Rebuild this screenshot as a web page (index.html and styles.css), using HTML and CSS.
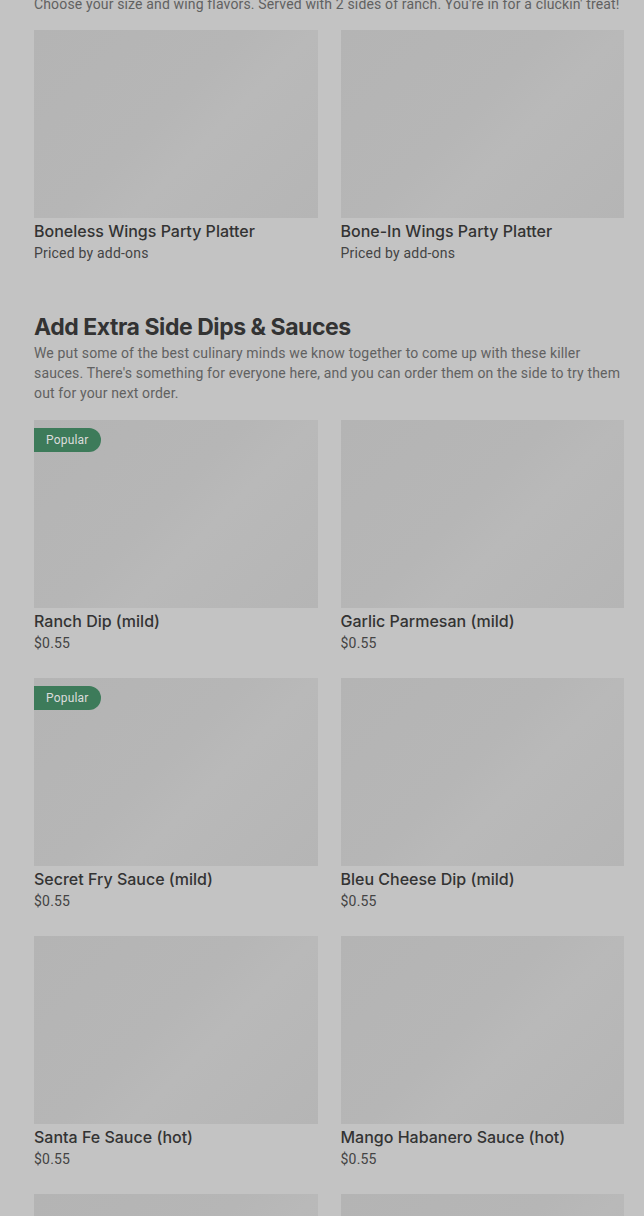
FILE: index.html
```html
<!DOCTYPE html>
<html lang="en">
<head>
<meta charset="utf-8">
<link rel="stylesheet" href="styles.css">
</head>
<body>
<div class="page">
  <section class="section first">
    <p class="desc">Choose your size and wing flavors. Served with 2 sides of ranch. You're in for a cluckin' treat!</p>
    <div class="grid">
      <div class="card"><div class="img"></div><div class="name">Boneless Wings Party Platter</div><div class="price">Priced by add-ons</div></div>
      <div class="card"><div class="img"></div><div class="name">Bone-In Wings Party Platter</div><div class="price">Priced by add-ons</div></div>
    </div>
  </section>
  <section class="section">
    <h2 class="title">Add Extra Side Dips &amp; Sauces</h2>
    <p class="desc">We put some of the best culinary minds we know together to come up with these killer sauces. There's something for everyone here, and you can order them on the side to try them out for your next order.</p>
    <div class="grid">
      <div class="card"><div class="img"><span class="badge">Popular</span></div><div class="name">Ranch Dip (mild)</div><div class="price">$0.55</div></div>
      <div class="card"><div class="img"></div><div class="name">Garlic Parmesan (mild)</div><div class="price">$0.55</div></div>
      <div class="card"><div class="img"><span class="badge">Popular</span></div><div class="name">Secret Fry Sauce (mild)</div><div class="price">$0.55</div></div>
      <div class="card"><div class="img"></div><div class="name">Bleu Cheese Dip (mild)</div><div class="price">$0.55</div></div>
      <div class="card"><div class="img"></div><div class="name">Santa Fe Sauce (hot)</div><div class="price">$0.55</div></div>
      <div class="card"><div class="img"></div><div class="name">Mango Habanero Sauce (hot)</div><div class="price">$0.55</div></div>
      <div class="card"><div class="img"></div></div>
      <div class="card"><div class="img"></div></div>
    </div>
  </section>
</div>
</body>
</html>
```

FILE: styles.css
```css
html, body {
  margin: 0;
  padding: 0;
  background: #c3c3c3;
  overflow: hidden;
}
body {
  font-family: "Inter", "Roboto", sans-serif;
  color: #333;
}
.page {
  padding: 0 20px 0 34px;
  margin-top: -6px;
}
.section {
  margin: 0;
}
.section.first {
  margin-bottom: 23px;
}
.title {
  margin: 0;
  font-size: 23px;
  font-weight: 700;
  line-height: 32px;
  letter-spacing: -0.45px;
  color: #333;
}
.desc {
  margin: 0 0 17px;
  font-family: "Roboto", sans-serif;
  font-size: 14px;
  line-height: 20px;
  letter-spacing: 0.15px;
  color: #616161;
}
.section.first .desc {
  margin-bottom: 16px;
  white-space: nowrap;
}
.grid {
  display: grid;
  grid-template-columns: 1fr 1fr;
  column-gap: 23px;
}
.card {
  padding-bottom: 26px;
}
.img {
  position: relative;
  height: 188px;
  background: linear-gradient(135deg, #b4b4b4 0%, #b6b6b6 45%, #b9b9b9 60%, #b5b5b5 100%);
}
.badge {
  position: absolute;
  top: 8px;
  left: 0;
  height: 24px;
  padding: 0 12px;
  line-height: 24px;
  font-family: "Roboto", sans-serif;
  font-size: 12px;
  letter-spacing: 0.2px;
  color: #dcdcdc;
  background: #3d7b5a;
  border-radius: 0 12px 12px 0;
}
.name {
  margin-top: 4px;
  font-size: 16px;
  line-height: 18px;
  font-weight: 500;
  color: #333;
}
.price {
  margin-top: 4px;
  font-family: "Roboto", sans-serif;
  font-size: 14px;
  line-height: 18px;
  letter-spacing: 0.2px;
  color: #444;
}
```
